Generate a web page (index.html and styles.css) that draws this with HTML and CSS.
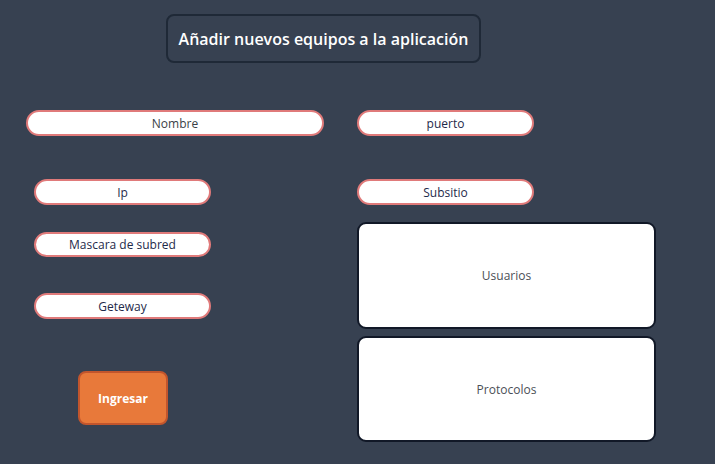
FILE: index.html
```html
<!DOCTYPE html>
<html lang="es">
<head>
<meta charset="utf-8">
<title>Añadir nuevos equipos</title>
<link rel="stylesheet" href="styles.css">
</head>
<body>
<div class="page">
  <header class="header">
    <h1 class="title">Añadir nuevos equipos a la aplicación</h1>
  </header>
  <main class="form">
    <div class="col col-left">
      <div class="field field-wide field-gray">Nombre</div>
      <div class="field field-ip">Ip</div>
      <div class="field field-mask">Mascara de subred</div>
      <div class="field field-gw">Geteway</div>
      <button class="submit">Ingresar</button>
    </div>
    <div class="col col-right">
      <div class="field">puerto</div>
      <div class="field field-sub">Subsitio</div>
      <div class="box box-users">Usuarios</div>
      <div class="box box-proto">Protocolos</div>
    </div>
  </main>
</div>
</body>
</html>
```

FILE: styles.css
```css
* { box-sizing: border-box; }
html, body {
  margin: 0;
  padding: 0;
  background: #374151;
  font-family: "Open Sans", "Noto Sans", sans-serif;
}
.page {
  width: 715px;
  height: 464px;
  overflow: hidden;
}
.header {
  padding: 14px 0 0 166px;
}
.title {
  margin: 0;
  width: 315px;
  height: 49px;
  border: 2px solid #1f2937;
  border-radius: 8px;
  color: #ffffff;
  font-size: 16px;
  font-weight: 600;
  display: flex;
  align-items: center;
  justify-content: center;
}
.form {
  display: flex;
  padding: 47px 0 0 26px;
  gap: 33px;
}
.col {
  display: flex;
  flex-direction: column;
  align-items: flex-start;
}
.col-left { width: 298px; }
.col-right { width: 299px; }
.field {
  width: 177px;
  height: 26px;
  background: #ffffff;
  border: 2px solid #e07a7a;
  border-radius: 13px;
  color: #1e2a4a;
  font-size: 12px;
  display: flex;
  align-items: center;
  justify-content: center;
}
.field-wide { width: 298px; }
.field-gray { color: #3a3f47; }
.field-ip { margin: 43px 0 0 8px; }
.field-mask { margin: 27px 0 0 8px; height: 25px; }
.field-gw { margin: 36px 0 0 8px; }
.submit {
  margin: 52px 0 0 52px;
  width: 90px;
  height: 54px;
  background: #e8793a;
  border: 2px solid #c2552c;
  border-radius: 8px;
  color: #ffffff;
  font-family: inherit;
  font-size: 12px;
  font-weight: 700;
  padding: 0;
}
.field-sub { margin-top: 43px; }
.box {
  width: 299px;
  height: 107px;
  background: #ffffff;
  border: 2px solid #111827;
  border-radius: 9px;
  color: #4b4f56;
  font-size: 12px;
  display: flex;
  align-items: center;
  justify-content: center;
}
.box-users { margin-top: 17px; }
.box-proto { margin-top: 7px; height: 106px; }
```
